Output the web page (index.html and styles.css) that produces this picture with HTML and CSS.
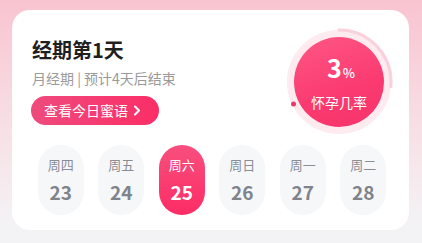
FILE: index.html
```html
<!DOCTYPE html>
<html lang="zh">
<head>
<meta charset="utf-8">
<link rel="stylesheet" href="styles.css">
</head>
<body>
<div class="card">
  <div class="top">
    <div class="info">
      <div class="title">经期第1天</div>
      <div class="sub">月经期 | 预计4天后结束</div>
      <div class="btn">查看今日蜜语<svg class="chev" width="8" height="11" viewBox="0 0 8 11"><polyline points="2,1.5 6,5.5 2,9.5" fill="none" stroke="#fff" stroke-width="2" stroke-linecap="round" stroke-linejoin="round"/></svg></div>
    </div>
    <div class="ring">
      <svg class="ring-svg" width="110" height="110" viewBox="0 0 110 110">
        <circle cx="55" cy="55" r="48.5" fill="none" stroke="#fdebf0" stroke-width="7"/>
        <path d="M55 3 A52 52 0 0 1 106.8 59.5" fill="none" stroke="#f9d0db" stroke-width="3" stroke-linecap="round"/>
        <circle cx="9.5" cy="77" r="2.5" fill="#e63a6b"/>
      </svg>
      <div class="ball">
        <div class="pct">3<span class="pct-sign">%</span></div>
        <div class="ball-label">怀孕几率</div>
      </div>
    </div>
  </div>
  <div class="days">
    <div class="day"><div class="wd">周四</div><div class="num">23</div></div>
    <div class="day"><div class="wd">周五</div><div class="num">24</div></div>
    <div class="day active"><div class="wd">周六</div><div class="num">25</div></div>
    <div class="day"><div class="wd">周日</div><div class="num">26</div></div>
    <div class="day"><div class="wd">周一</div><div class="num">27</div></div>
    <div class="day"><div class="wd">周二</div><div class="num">28</div></div>
  </div>
</div>
</body>
</html>
```
FILE: styles.css
```css
* { box-sizing: border-box; }
html, body { margin: 0; padding: 0; }
body {
  width: 422px;
  height: 243px;
  overflow: hidden;
  font-family: "Noto Sans CJK SC", "Noto Sans", sans-serif;
  background: linear-gradient(180deg, #f8c4d0 0%, #f8d6df 35%, #f6e8ec 70%, #f3f2f5 92%, #f3f3f5 100%);
  padding: 10px 13px 13px 12px;
}
.card {
  width: 397px;
  height: 220px;
  background: #fff;
  border-radius: 18px;
  padding: 17px 15px 0 19px;
  display: flex;
  flex-direction: column;
}
.top {
  display: flex;
  justify-content: space-between;
  align-items: flex-start;
}
.info {
  padding-top: 10px;
  display: flex;
  flex-direction: column;
  align-items: flex-start;
}
.title {
  font-size: 20px;
  line-height: 26px;
  font-weight: 700;
  color: #1f1f1f;
  padding-left: 1px;
}
.sub {
  margin-top: 5px;
  font-size: 14px;
  line-height: 20px;
  color: #9a9a9a;
  padding-left: 1px;
}
.btn {
  margin-top: 8px;
  height: 29px;
  width: 128px;
  border-radius: 15px;
  background: linear-gradient(90deg, #ef4b7d 0%, #fb2e67 100%);
  color: #fff;
  font-size: 14px;
  line-height: 29px;
  padding-left: 13px;
  display: flex;
  align-items: center;
  gap: 5px;
}
.chev { display: block; }
.ring {
  position: relative;
  width: 110px;
  height: 110px;
  display: flex;
  align-items: center;
  justify-content: center;
}
.ring-svg { position: absolute; left: 0; top: 0; }
.ball {
  position: relative;
  width: 90px;
  height: 90px;
  border-radius: 50%;
  background: linear-gradient(160deg, #ff5785 0%, #fa3a70 60%, #f7346b 100%);
  display: flex;
  flex-direction: column;
  align-items: center;
  justify-content: center;
  color: #fff;
  gap: 6px;
}
.pct {
  font-size: 25px;
  line-height: 28px;
  font-weight: 700;
  padding-left: 4px;
}
.pct-sign {
  font-size: 13px;
  font-weight: 500;
  margin-left: 1px;
}
.ball-label {
  font-size: 14px;
  line-height: 18px;
}
.days {
  margin-top: 8px;
  display: flex;
  justify-content: center;
  gap: 14.5px;
  padding-right: 1px;
}
.day {
  width: 46px;
  height: 70px;
  border-radius: 23px;
  background: #f6f7f9;
  display: flex;
  flex-direction: column;
  align-items: center;
  padding-top: 10px;
}
.wd {
  font-size: 13px;
  line-height: 20px;
  color: #8a8d94;
}
.num {
  margin-top: 5px;
  font-size: 19px;
  line-height: 24px;
  font-weight: 700;
  color: #7f838b;
}
.day.active {
  background: linear-gradient(180deg, #f84f7e 0%, #fc2c65 100%);
}
.day.active .wd, .day.active .num { color: #fff; }
```
